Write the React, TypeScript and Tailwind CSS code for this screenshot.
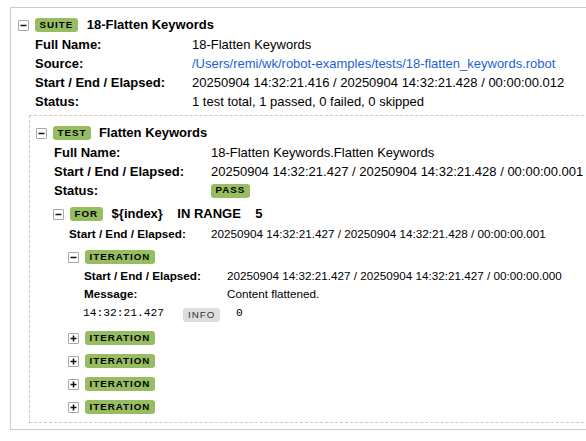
import React from 'react';

const Toggle: React.FC<{ open?: boolean }> = ({ open }) => (
    <span className="flex h-[11px] w-[11px] shrink-0 items-center justify-center rounded-[1px] border border-[#a8a8a8] bg-white">
        <svg width="7" height="7" viewBox="0 0 7 7">
            <rect x="0.5" y="2.75" width="6" height="1.5" fill="#111" />
            {!open && <rect x="2.75" y="0.5" width="1.5" height="6" fill="#111" />}
        </svg>
    </span>
);

const Label: React.FC<{ text: string; gray?: boolean }> = ({ text, gray }) => (
    <span
        className={
            gray
                ? 'flex h-[14px] items-center rounded-[3px] bg-[#dddddd] px-[5px] text-[9.75px] tracking-[1px] text-[#333]'
                : 'flex h-[14px] items-center rounded-[3px] bg-[#97bd61] px-[4.5px] text-[9.75px] font-bold tracking-[1px] text-black'
        }
    >
        {text}
    </span>
);

const Header: React.FC<{ label: string; title?: string; open?: boolean; gap?: string }> = ({ label, title, open, gap }) => (
    <div className="flex h-[20px] items-center">
        <Toggle open={open} />
        <span className="ml-[6px]">
            <Label text={label} />
        </span>
        {title && <span className={`${gap || 'ml-[9px]'} whitespace-pre text-[13px] font-bold`}>{title}</span>}
    </div>
);

const Row: React.FC<{ label: string; width: string; small?: boolean; children: React.ReactNode }> = ({ label, width, small, children }) => (
    <div className={small ? 'flex h-[18px] items-center text-[11.7px]' : 'flex h-[19px] items-center text-[13px]'}>
        <span className={`${width} shrink-0 font-bold`}>{label}</span>
        <span className="whitespace-nowrap">{children}</span>
    </div>
);

export default function App() {
    return (
        <div className="h-[441px] w-[586px] overflow-hidden bg-white text-black" style={{ fontFamily: '"Liberation Sans", Arial, sans-serif' }}>
            <div className="ml-[10px] mt-[7px] h-[423px] w-[620px] border border-[#cccccc] pl-[7px] pt-[7px]">
                <Header label="SUITE" title="18-Flatten Keywords" open />
                <div className="ml-[17px]">
                    <Row label="Full Name:" width="w-[157px]">18-Flatten Keywords</Row>
                    <Row label="Source:" width="w-[157px]">
                        <a className="text-[#1c5fd4]">/Users/remi/wk/robot-examples/tests/18-flatten_keywords.robot</a>
                    </Row>
                    <Row label="Start / End / Elapsed:" width="w-[157px]">20250904 14:32:21.416 / 20250904 14:32:21.428 / 00:00:00.012</Row>
                    <Row label="Status:" width="w-[157px]">1 test total, 1 passed, 0 failed, 0 skipped</Row>
                </div>

                <div className="ml-[11px] mt-[4px] h-[308px] w-[600px] border border-dashed border-[#c8c8c8] pl-[6px] pt-[7px]">
                    <Header label="TEST" title="Flatten Keywords" open gap="ml-[8px]" />
                    <div className="ml-[18px]">
                        <Row label="Full Name:" width="w-[157px]">18-Flatten Keywords.Flatten Keywords</Row>
                        <Row label="Start / End / Elapsed:" width="w-[157px]">20250904 14:32:21.427 / 20250904 14:32:21.428 / 00:00:00.001</Row>
                        <Row label="Status:" width="w-[157px]">
                            <Label text="PASS" />
                        </Row>
                    </div>

                    <div className="ml-[17px] mt-[4px]">
                        <Header label="FOR" title={'${index}    IN RANGE    5'} open />
                        <div className="ml-[16px] mt-[1px]">
                            <Row label="Start / End / Elapsed:" width="w-[142px]" small>
                                20250904 14:32:21.427 / 20250904 14:32:21.428 / 00:00:00.001
                            </Row>
                        </div>

                        <div className="ml-[15px] mt-[4px]">
                            <Header label="ITERATION" open />
                            <div className="ml-[16px]">
                                <Row label="Start / End / Elapsed:" width="w-[143px]" small>
                                    20250904 14:32:21.427 / 20250904 14:32:21.427 / 00:00:00.000
                                </Row>
                                <Row label="Message:" width="w-[143px]" small>Content flattened.</Row>
                                <div className="-ml-[1px] flex h-[20px] items-center">
                                    <span className="w-[100px] text-[11.25px]" style={{ fontFamily: '"Liberation Mono", monospace' }}>
                                        14:32:21.427
                                    </span>
                                    <span className="w-[53px]">
                                        <span className="inline-flex">
                                            <Label text="INFO" gray />
                                        </span>
                                    </span>
                                    <span className="text-[11.25px]" style={{ fontFamily: '"Liberation Mono", monospace' }}>
                                        0
                                    </span>
                                </div>
                            </div>
                            <div className="mt-[5px] flex flex-col gap-[3px]">
                                <Header label="ITERATION" />
                                <Header label="ITERATION" />
                                <Header label="ITERATION" />
                                <Header label="ITERATION" />
                            </div>
                        </div>
                    </div>
                </div>
            </div>
        </div>
    );
}
